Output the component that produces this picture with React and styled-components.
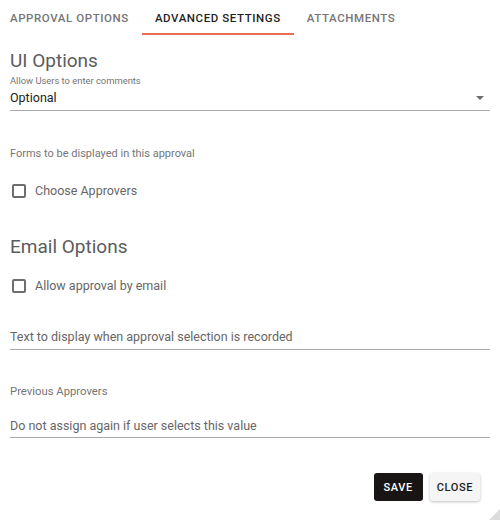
import React from "react";
import styled, { createGlobalStyle } from "styled-components";

const Global = createGlobalStyle`
  html, body { margin: 0; padding: 0; background: #fff; }
  body { font-family: Roboto, "Liberation Sans", Arial, sans-serif; }
  * { box-sizing: border-box; }
`;

const Page = styled.div`
  position: relative;
  width: 500px;
  height: 520px;
  padding: 0 10px;
  display: flex;
  flex-direction: column;
  background: #fff;
  overflow: hidden;
`;

const TabBar = styled.div`
  display: flex;
  height: 35px;
  margin-left: -13px;
`;

const Tab = styled.div`
  position: relative;
  display: flex;
  align-items: center;
  justify-content: center;
  padding: 0 13px;
  height: 35px;
  font-size: 11.5px;
  font-weight: 500;
  letter-spacing: 0.58px;
  text-transform: uppercase;
  color: ${(p) => (p.$active ? "#1f1f1f" : "#767676")};
  &::after {
    content: "";
    position: absolute;
    left: 0;
    right: 0;
    bottom: 0;
    height: 2px;
    background: ${(p) => (p.$active ? "#e96b56" : "transparent")};
  }
`;

const Heading = styled.h2`
  margin: ${(p) => p.$mt}px 0 0;
  font-size: 19px;
  line-height: 26px;
  font-weight: 400;
  color: #5c5c5c;
`;

const SmallLabel = styled.div`
  margin-top: ${(p) => p.$mt || 0}px;
  font-size: ${(p) => p.$size || 11}px;
  line-height: 14px;
  color: #757575;
`;

const SelectBox = styled.div`
  display: flex;
  align-items: center;
  justify-content: space-between;
  height: 23px;
  margin-top: ${(p) => p.$mt || 0}px;
  padding-bottom: 2px;
  border-bottom: 1px solid #a8a8a8;
`;

const SelectValue = styled.span`
  font-size: 12.5px;
  line-height: 20px;
  color: #222;
`;

const Caret = styled.span`
  width: 0;
  height: 0;
  margin-right: 6px;
  border-left: 4px solid transparent;
  border-right: 4px solid transparent;
  border-top: 4px solid #6b6b6b;
`;

const CheckRow = styled.label`
  display: flex;
  align-items: center;
  height: 24px;
  margin-top: ${(p) => p.$mt}px;
  padding-left: 2px;
  gap: 9px;
`;

const Box = styled.span`
  width: 14px;
  height: 14px;
  border: 2px solid #6e6e6e;
  border-radius: 2px;
`;

const CheckText = styled.span`
  font-size: 12.5px;
  line-height: 20px;
  color: #666;
`;

const TextField = styled.div`
  height: ${(p) => p.$h}px;
  margin-top: ${(p) => p.$mt}px;
  display: flex;
  align-items: flex-start;
  border-bottom: 1px solid #a8a8a8;
`;

const FieldText = styled.span`
  font-size: 12.5px;
  line-height: 20px;
  color: #666;
`;

const Actions = styled.div`
  display: flex;
  justify-content: flex-end;
  gap: 7px;
  margin-top: 35px;
  padding-right: 10px;
`;

const Button = styled.button`
  height: 28px;
  padding: 0 ${(p) => (p.$primary ? 10 : 7)}px;
  border: none;
  border-radius: 3px;
  font-family: Roboto, "Liberation Sans", Arial, sans-serif;
  font-size: 11px;
  font-weight: 500;
  letter-spacing: 0.6px;
  text-transform: uppercase;
  background: ${(p) => (p.$primary ? "#1a1515" : "#f5f5f5")};
  color: ${(p) => (p.$primary ? "#fff" : "#1f1f1f")};
  box-shadow: ${(p) =>
    p.$primary ? "none" : "0 1px 3px rgba(0,0,0,0.25)"};
`;

const Grip = styled.div`
  position: absolute;
  right: 0;
  bottom: 0;
  width: 0;
  height: 0;
  border-left: 11px solid transparent;
  border-bottom: 11px solid #dcdcdc;
`;

export default function App() {
  return (
    <>
      <Global />
      <Page>
        <TabBar>
          <Tab>Approval Options</Tab>
          <Tab $active>Advanced Settings</Tab>
          <Tab>Attachments</Tab>
        </TabBar>

        <Heading $mt={13}>UI Options</Heading>
        <SmallLabel $size={9.4}>Allow Users to enter comments</SmallLabel>
        <SelectBox>
          <SelectValue>Optional</SelectValue>
          <Caret />
        </SelectBox>

        <SmallLabel $mt={36}>Forms to be displayed in this approval</SmallLabel>
        <CheckRow $mt={18}>
          <Box />
          <CheckText>Choose Approvers</CheckText>
        </CheckRow>

        <Heading $mt={31}>Email Options</Heading>
        <CheckRow $mt={14}>
          <Box />
          <CheckText>Allow approval by email</CheckText>
        </CheckRow>

        <TextField $mt={29} $h={23}>
          <FieldText>Text to display when approval selection is recorded</FieldText>
        </TextField>

        <SmallLabel $mt={35} $size={11.3}>Previous Approvers</SmallLabel>
        <TextField $mt={17} $h={22}>
          <FieldText>Do not assign again if user selects this value</FieldText>
        </TextField>

        <Actions>
          <Button $primary>Save</Button>
          <Button>Close</Button>
        </Actions>
        <Grip />
      </Page>
    </>
  );
}
